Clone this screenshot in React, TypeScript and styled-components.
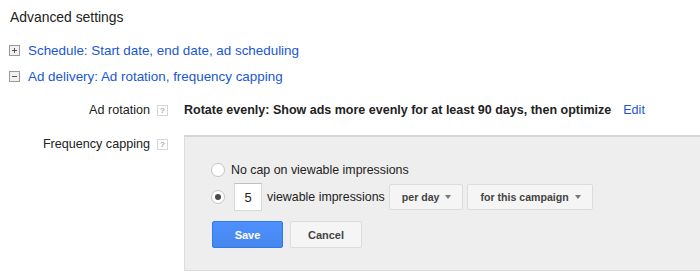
import React, { FC } from 'react';
import styled, { createGlobalStyle } from 'styled-components';

const GlobalStyle = createGlobalStyle`
  html, body {
    margin: 0;
    padding: 0;
    background: #fff;
    overflow: hidden;
  }
  body {
    font-family: Arial, "Liberation Sans", sans-serif;
    color: #222;
  }
`;

const Page = styled.div`
  width: 700px;
  height: 276px;
  overflow: hidden;
  padding-left: 10px;
  box-sizing: border-box;
`;

const Title = styled.div`
  font-size: 13.9px;
  line-height: 18px;
  color: #222;
  padding-top: 8px;
  margin-bottom: 11px;
`;

const Expander = styled.div`
  display: flex;
  align-items: center;
  height: 26px;
  gap: 8px;
`;

const ToggleBox = styled.span<{ open?: boolean }>`
  width: 9px;
  height: 9px;
  border: 1px solid #999;
  background: #f1f1f1;
  position: relative;
  margin-left: -1px;

  &::before,
  &::after {
    content: '';
    position: absolute;
    background: #555;
  }
  &::before {
    left: 2px;
    right: 2px;
    top: 4px;
    height: 1px;
  }
  &::after {
    display: ${(p) => (p.open ? 'none' : 'block')};
    top: 2px;
    bottom: 2px;
    left: 4px;
    width: 1px;
  }
`;

const Link = styled.a`
  font-size: 13.4px;
  color: #1a56d6;
  text-decoration: none;
  cursor: pointer;
`;

const Settings = styled.div`
  display: flex;
  flex-direction: column;
  margin-top: 11px;
`;

const Row = styled.div<{ gapTop?: number }>`
  display: flex;
  align-items: flex-start;
  margin-top: ${(p) => p.gapTop ?? 0}px;
`;

const Label = styled.div<{ tall?: number }>`
  flex: 0 0 174px;
  box-sizing: border-box;
  display: flex;
  justify-content: flex-end;
  align-items: center;
  gap: 7px;
  padding-right: 16px;
  font-size: 12.6px;
  color: #222;
  height: ${(p) => p.tall ?? 20}px;
`;

const Help = styled.span`
  width: 9px;
  height: 9px;
  border: 1px solid #d6d6d6;
  color: #aaa;
  font-size: 8px;
  line-height: 9px;
  text-align: center;
  font-weight: bold;
`;

const Value = styled.div`
  display: flex;
  align-items: center;
  gap: 12px;
  height: 20px;
  font-size: 12.5px;
`;

const Strong = styled.span`
  font-weight: bold;
  color: #222;
`;

const EditLink = styled(Link)`
  font-size: 12.6px;
`;

const Panel = styled.div`
  width: 560px;
  flex: none;
  background: #eee;
  border: 1px solid #dcdcdc;
  border-top: 2px solid #d6d6d6;
  padding: 24px 0 22px 26px;
  box-sizing: border-box;
`;

const Option = styled.div<{ slim?: boolean }>`
  display: flex;
  align-items: center;
  font-size: 12.4px;
  color: #222;
  height: ${(p) => (p.slim ? 18 : 28)}px;
  margin-top: ${(p) => (p.slim ? 0 : 4)}px;
`;

const Radio = styled.span<{ checked?: boolean }>`
  width: 12px;
  height: 12px;
  border-radius: 50%;
  border: 1px solid #c4c4c4;
  background: #fff;
  margin-right: ${(p) => (p.checked ? 9 : 6)}px;
  display: flex;
  align-items: center;
  justify-content: center;

  &::after {
    content: '';
    width: 6px;
    height: 6px;
    border-radius: 50%;
    background: #4a4a4a;
    display: ${(p) => (p.checked ? 'block' : 'none')};
  }
`;

const CountInput = styled.div`
  width: 26px;
  height: 26px;
  border: 1px solid #d9d9d9;
  border-top-color: #c0c0c0;
  background: #fff;
  font-size: 13px;
  display: flex;
  align-items: center;
  justify-content: center;
  margin-right: 5px;
`;

const Dropdown = styled.div`
  display: flex;
  align-items: center;
  gap: 6px;
  height: 24px;
  padding: 0 11px 0 12px;
  margin-left: 4px;
  border: 1px solid #dcdcdc;
  border-radius: 2px;
  background: #f5f5f5;
  font-size: 10.6px;
  font-weight: bold;
  color: #444;
`;

const Caret = styled.span`
  width: 0;
  height: 0;
  border-left: 3px solid transparent;
  border-right: 3px solid transparent;
  border-top: 4px solid #777;
`;

const Actions = styled.div`
  display: flex;
  gap: 7px;
  margin-top: 10px;
  margin-left: 1px;
`;

const Button = styled.div<{ primary?: boolean }>`
  width: ${(p) => (p.primary ? 69 : 70)}px;
  height: 25px;
  display: flex;
  align-items: center;
  justify-content: center;
  font-size: 11px;
  font-weight: bold;
  border-radius: 2px;
  border: 1px solid ${(p) => (p.primary ? '#3079ed' : '#dcdcdc')};
  background: ${(p) => (p.primary ? 'linear-gradient(#4d90fe, #4787ed)' : '#f5f5f5')};
  color: ${(p) => (p.primary ? '#fff' : '#444')};
`;

const App: FC = () => (
  <Page>
    <GlobalStyle />
    <Title>Advanced settings</Title>
    <Expander>
      <ToggleBox />
      <Link>Schedule: Start date, end date, ad scheduling</Link>
    </Expander>
    <Expander>
      <ToggleBox open />
      <Link>Ad delivery: Ad rotation, frequency capping</Link>
    </Expander>
    <Settings>
      <Row>
        <Label>
          Ad rotation <Help>?</Help>
        </Label>
        <Value>
          <Strong>Rotate evenly: Show ads more evenly for at least 90 days, then optimize</Strong>
          <EditLink>Edit</EditLink>
        </Value>
      </Row>
      <Row gapTop={15}>
        <Label tall={18}>
          Frequency capping <Help>?</Help>
        </Label>
        <Panel>
          <Option slim>
            <Radio />
            No cap on viewable impressions
          </Option>
          <Option>
            <Radio checked />
            <CountInput>5</CountInput>
            viewable impressions
            <Dropdown>
              per day <Caret />
            </Dropdown>
            <Dropdown>
              for this campaign <Caret />
            </Dropdown>
          </Option>
          <Actions>
            <Button primary>Save</Button>
            <Button>Cancel</Button>
          </Actions>
        </Panel>
      </Row>
    </Settings>
  </Page>
);

export default App;
